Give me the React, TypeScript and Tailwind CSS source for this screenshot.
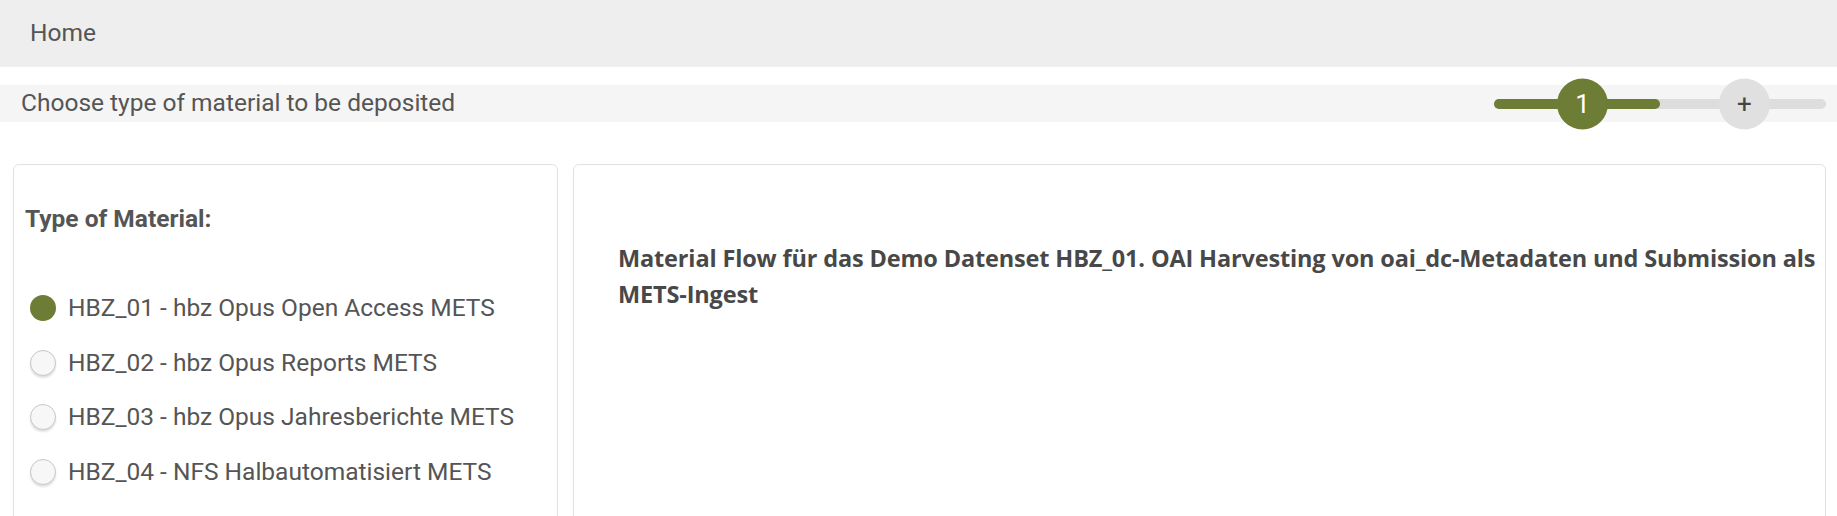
import React, { useState } from 'react';

const materials = [
  { id: 'HBZ_01', label: 'HBZ_01 - hbz Opus Open Access METS' },
  { id: 'HBZ_02', label: 'HBZ_02 - hbz Opus Reports METS' },
  { id: 'HBZ_03', label: 'HBZ_03 - hbz Opus Jahresberichte METS' },
  { id: 'HBZ_04', label: 'HBZ_04 - NFS Halbautomatisiert METS' },
];

const App: React.FC = () => {
  const [selected, setSelected] = useState('HBZ_01');

  return (
    <div className="min-h-screen bg-white font-['Roboto',sans-serif] text-[24.5px] text-[#555555]">
      {/* Breadcrumb */}
      <div className="flex h-[67px] items-center bg-[#eeeeee] pl-[30px]">Home</div>

      {/* Step header */}
      <div className="mt-[18px] flex h-[37px] items-center justify-between bg-[#f5f5f5] pl-[21px] pr-[11px]">
        <span>Choose type of material to be deposited</span>
        <div className="relative h-[10px] w-[332px] rounded-full bg-[#dddddd]">
          <div className="h-full w-[166px] rounded-full bg-[#6d7d36]" />
          <div className="absolute left-[63px] top-1/2 flex h-[51px] w-[51px] -translate-y-1/2 items-center justify-center rounded-full bg-[#6d7d36] text-[26px] text-white">
            1
          </div>
          <div className="absolute left-[225px] top-1/2 flex h-[51px] w-[51px] -translate-y-1/2 items-center justify-center rounded-full bg-[#e0e0e0] text-[26px] text-[#444]">
            +
          </div>
        </div>
      </div>

      {/* Content */}
      <div className="mt-[42px] flex gap-[15px] pl-[13px] pr-[11px]">
        <div className="h-[420px] w-[545px] shrink-0 rounded-[6px] border border-[#dde2e7] pl-[11px] pt-[36px]">
          <div className="font-bold leading-[36px]">Type of Material:</div>
          <div className="mt-[44px] flex flex-col">
            {materials.map((m) => (
              <label
                key={m.id}
                className="flex h-[54.5px] cursor-pointer items-center gap-[12px] pl-[5px]"
                onClick={() => setSelected(m.id)}
              >
                {selected === m.id ? (
                  <span className="h-[26px] w-[26px] rounded-full bg-[#6d7d36]" />
                ) : (
                  <span className="h-[26px] w-[26px] rounded-full border border-[#c8c8c8] bg-[#f7f7f7] shadow-[0_2px_2px_rgba(0,0,0,0.12)]" />
                )}
                <span className="leading-[36px]">{m.label}</span>
              </label>
            ))}
          </div>
        </div>

        <div className="h-[420px] flex-1 rounded-[6px] border border-[#dde2e7] pl-[44px] pr-[2px] pt-[75px]">
          <p className="font-['Open_Sans',sans-serif] text-[23.5px] font-bold leading-[36px] tracking-[-0.15px] text-[#484848]">
            Material Flow für das Demo Datenset HBZ_01. OAI Harvesting von oai_dc-Metadaten und Submission als METS-Ingest
          </p>
        </div>
      </div>
    </div>
  );
};

export default App;
